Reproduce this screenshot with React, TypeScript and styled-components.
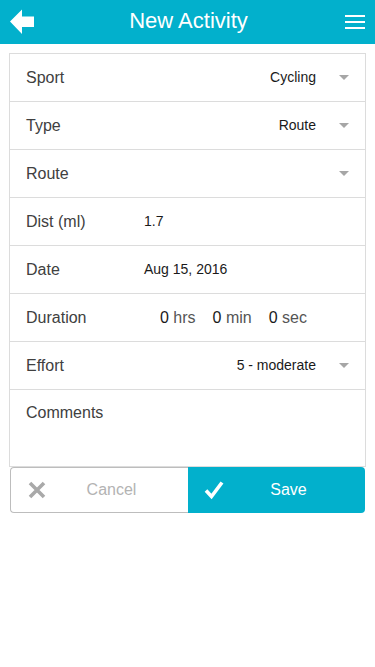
import React from "react";
import styled, { createGlobalStyle } from "styled-components";

const GlobalStyle = createGlobalStyle`
  html, body { margin: 0; padding: 0; background: #fff; }
  body { font-family: "Liberation Sans", Arial, sans-serif; -webkit-font-smoothing: antialiased; }
  * { box-sizing: border-box; }
`;

const BRAND = "#02b0cc";

const Page = styled.div`
  width: 375px;
  min-height: 667px;
  background: #fff;
`;

const Header = styled.header`
  height: 44px;
  background: ${BRAND};
  display: flex;
  align-items: center;
  justify-content: space-between;
  padding: 0 10px;
`;

const Title = styled.h1`
  margin: 0;
  flex: 1;
  text-align: center;
  color: #fff;
  font-size: 22px;
  font-weight: 400;
  line-height: 26px;
  margin-top: -2px;
  padding-left: 2px;
`;

const IconSlot = styled.div<{ $end?: boolean }>`
  width: 24px;
  height: 44px;
  display: flex;
  align-items: center;
  justify-content: ${(p) => (p.$end ? "flex-end" : "flex-start")};
`;

const Card = styled.div`
  margin: 9px 9px 0;
  border: 1px solid #dcdcdc;
`;

const Row = styled.div<{ $tall?: boolean }>`
  display: flex;
  align-items: ${(p) => (p.$tall ? "flex-start" : "center")};
  height: ${(p) => (p.$tall ? "77px" : "48px")};
  padding: ${(p) => (p.$tall ? "13px 17px 0 16px" : "0 17px 0 16px")};
  border-top: 1px solid #dcdcdc;
  &:first-child { border-top: none; height: ${(p) => (p.$tall ? "76px" : "47px")}; }
`;

const Label = styled.span`
  width: 118px;
  flex: none;
  font-size: 16px;
  color: #404040;
  line-height: 20px;
`;

const Value = styled.span<{ $right?: boolean }>`
  flex: 1;
  text-align: ${(p) => (p.$right ? "right" : "left")};
  font-size: 14px;
  color: #1a1a1a;
  line-height: 18px;
  margin-top: -2px;
  padding-right: ${(p) => (p.$right ? "0" : "0")};
`;

const Caret = styled.span`
  width: 0;
  height: 0;
  margin-left: 23px;
  margin-right: -1px;
  border-left: 5px solid transparent;
  border-right: 5px solid transparent;
  border-top: 5px solid #a6a6a6;
  flex: none;
`;

const DurationGroup = styled.div`
  display: flex;
  gap: 17px;
  padding-left: 16px;
  font-size: 16px;
  line-height: 20px;
`;

const DurPart = styled.span`
  color: #1a1a1a;
  white-space: pre;
`;

const Unit = styled.span`
  color: #555;
`;

const ButtonBar = styled.div`
  display: flex;
  margin: 0 10px;
  height: 46px;
`;

const ActionButton = styled.button<{ $primary?: boolean }>`
  flex: 1;
  display: flex;
  align-items: center;
  height: 46px;
  padding: 0 12px 0 ${(p) => (p.$primary ? "16px" : "16px")};
  font-family: inherit;
  font-size: 16px;
  border: ${(p) => (p.$primary ? "none" : "1px solid #bdbdbd")};
  border-right: none;
  border-radius: ${(p) => (p.$primary ? "0 4px 4px 0" : "4px 0 0 4px")};
  background: ${(p) => (p.$primary ? BRAND : "#fff")};
  color: ${(p) => (p.$primary ? "#fff" : "#b3b3b3")};
  cursor: pointer;
`;

const BtnIcon = styled.span`
  width: 20px;
  height: 20px;
  display: flex;
  align-items: center;
  justify-content: center;
  flex: none;
`;

const BtnText = styled.span`
  flex: 1;
  text-align: center;
`;

const BackArrow = () => (
  <svg width="24" height="26" viewBox="0 0 24 26">
    <path d="M0 12.5 L12 0.5 L12 7.5 L24 7.5 Q24.5 7.5 24.5 8 L24.5 17.5 Q24.5 18 24 18 L12 18 L12 25 Z" fill="#fff" />
  </svg>
);

const Hamburger = () => (
  <svg width="20" height="16" viewBox="0 0 20 16">
    <rect x="0" y="1" width="20" height="2" fill="#fff" />
    <rect x="0" y="7" width="20" height="2" fill="#fff" />
    <rect x="0" y="13" width="20" height="2" fill="#fff" />
  </svg>
);

const XIcon = () => (
  <svg width="18" height="18" viewBox="0 0 18 18">
    <path d="M2 2 L16 16 M16 2 L2 16" stroke="#a9a9a9" strokeWidth="3.6" strokeLinecap="butt" />
  </svg>
);

const CheckIcon = () => (
  <svg width="20" height="20" viewBox="0 0 20 20">
    <path d="M2 10.5 L7.5 16.5 L18 2.5" stroke="#fff" strokeWidth="3.6" fill="none" strokeLinejoin="miter" />
  </svg>
);

type SelectRowProps = { label: string; value?: string };
const SelectRow = ({ label, value = "" }: SelectRowProps) => (
  <Row>
    <Label>{label}</Label>
    <Value $right>{value}</Value>
    <Caret />
  </Row>
);

const TextRow = ({ label, value }: { label: string; value: string }) => (
  <Row>
    <Label>{label}</Label>
    <Value>{value}</Value>
  </Row>
);

export default function App() {
  return (
    <Page>
      <GlobalStyle />
      <Header>
        <IconSlot>
          <BackArrow />
        </IconSlot>
        <Title>New Activity</Title>
        <IconSlot $end>
          <Hamburger />
        </IconSlot>
      </Header>
      <Card>
        <SelectRow label="Sport" value="Cycling" />
        <SelectRow label="Type" value="Route" />
        <SelectRow label="Route" />
        <TextRow label="Dist (ml)" value="1.7" />
        <TextRow label="Date" value="Aug 15, 2016" />
        <Row>
          <Label>Duration</Label>
          <DurationGroup>
            <DurPart>
              0 <Unit>hrs</Unit>
            </DurPart>
            <DurPart>
              0 <Unit>min</Unit>
            </DurPart>
            <DurPart>
              0 <Unit>sec</Unit>
            </DurPart>
          </DurationGroup>
        </Row>
        <SelectRow label="Effort" value="5 - moderate" />
        <Row $tall>
          <Label>Comments</Label>
        </Row>
      </Card>
      <ButtonBar>
        <ActionButton>
          <BtnIcon>
            <XIcon />
          </BtnIcon>
          <BtnText>Cancel</BtnText>
        </ActionButton>
        <ActionButton $primary>
          <BtnIcon>
            <CheckIcon />
          </BtnIcon>
          <BtnText>Save</BtnText>
        </ActionButton>
      </ButtonBar>
    </Page>
  );
}
